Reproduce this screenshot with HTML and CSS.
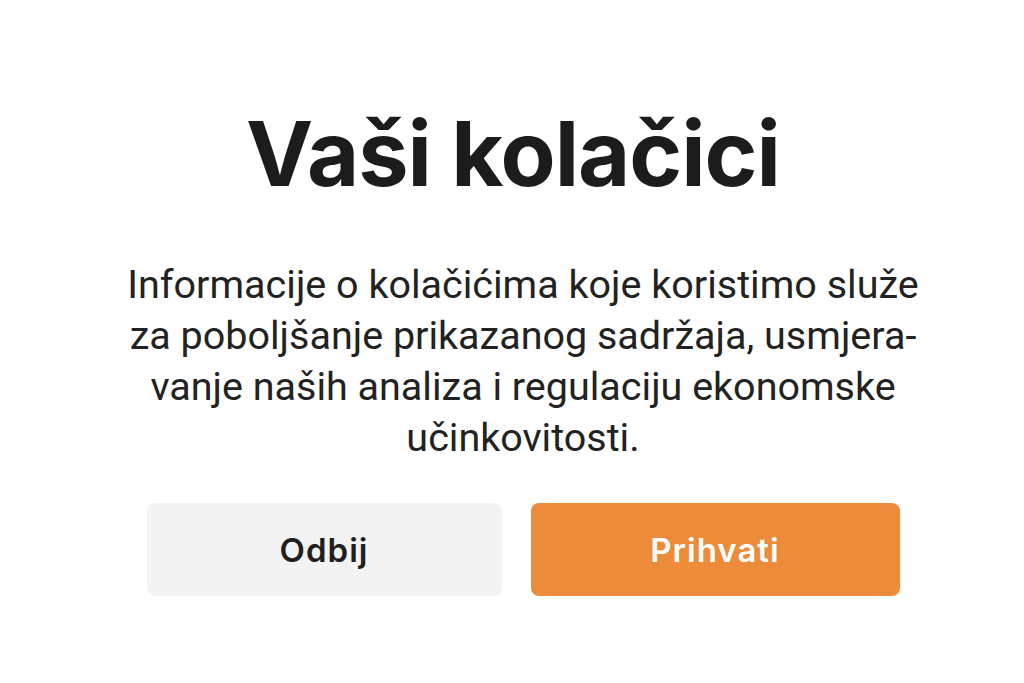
FILE: index.html
```html
<!DOCTYPE html>
<html lang="hr">
<head>
<meta charset="utf-8">
<title>Vaši kolačici</title>
<link rel="stylesheet" href="styles.css">
</head>
<body>
<main class="consent">
  <h1 class="title">Vaši kolačici</h1>
  <p class="text">Informacije o kolačićima koje koristimo služe<br>za poboljšanje prikazanog sadržaja, usmjera-<br>vanje naših analiza i regulaciju ekonomske<br>učinkovitosti.</p>
  <div class="actions">
    <button class="btn btn-decline">Odbij</button>
    <button class="btn btn-accept">Prihvati</button>
  </div>
</main>
</body>
</html>
```
FILE: styles.css
```css
html, body {
  margin: 0;
  background: #ffffff;
}
.consent {
  display: flex;
  flex-direction: column;
  align-items: center;
  padding-top: 109px;
  font-family: Inter, "Noto Sans", sans-serif;
  color: #1d1d1d;
}
.title {
  margin: 0;
  font-size: 90px;
  line-height: 1;
  font-weight: 700;
  letter-spacing: -1px;
  color: #1c1c1c;
  padding-left: 2px;
}
.text {
  margin: 60px 0 0;
  font-family: Roboto, "Noto Sans", sans-serif;
  font-size: 39.5px;
  line-height: 51px;
  font-weight: 400;
  text-align: center;
  color: #222222;
  padding-left: 22px;
}
.actions {
  display: flex;
  gap: 29px;
  margin-top: 40px;
  padding-left: 22px;
}
.btn {
  height: 93px;
  border: none;
  border-radius: 8px;
  font-family: Inter, sans-serif;
  font-size: 33px;
  font-weight: 600;
  letter-spacing: 1px;
}
.btn-decline {
  width: 355px;
  background: #f3f3f3;
  color: #1f1f1f;
}
.btn-accept {
  width: 369px;
  background: #ec8b3a;
  color: #ffffff;
}
```
